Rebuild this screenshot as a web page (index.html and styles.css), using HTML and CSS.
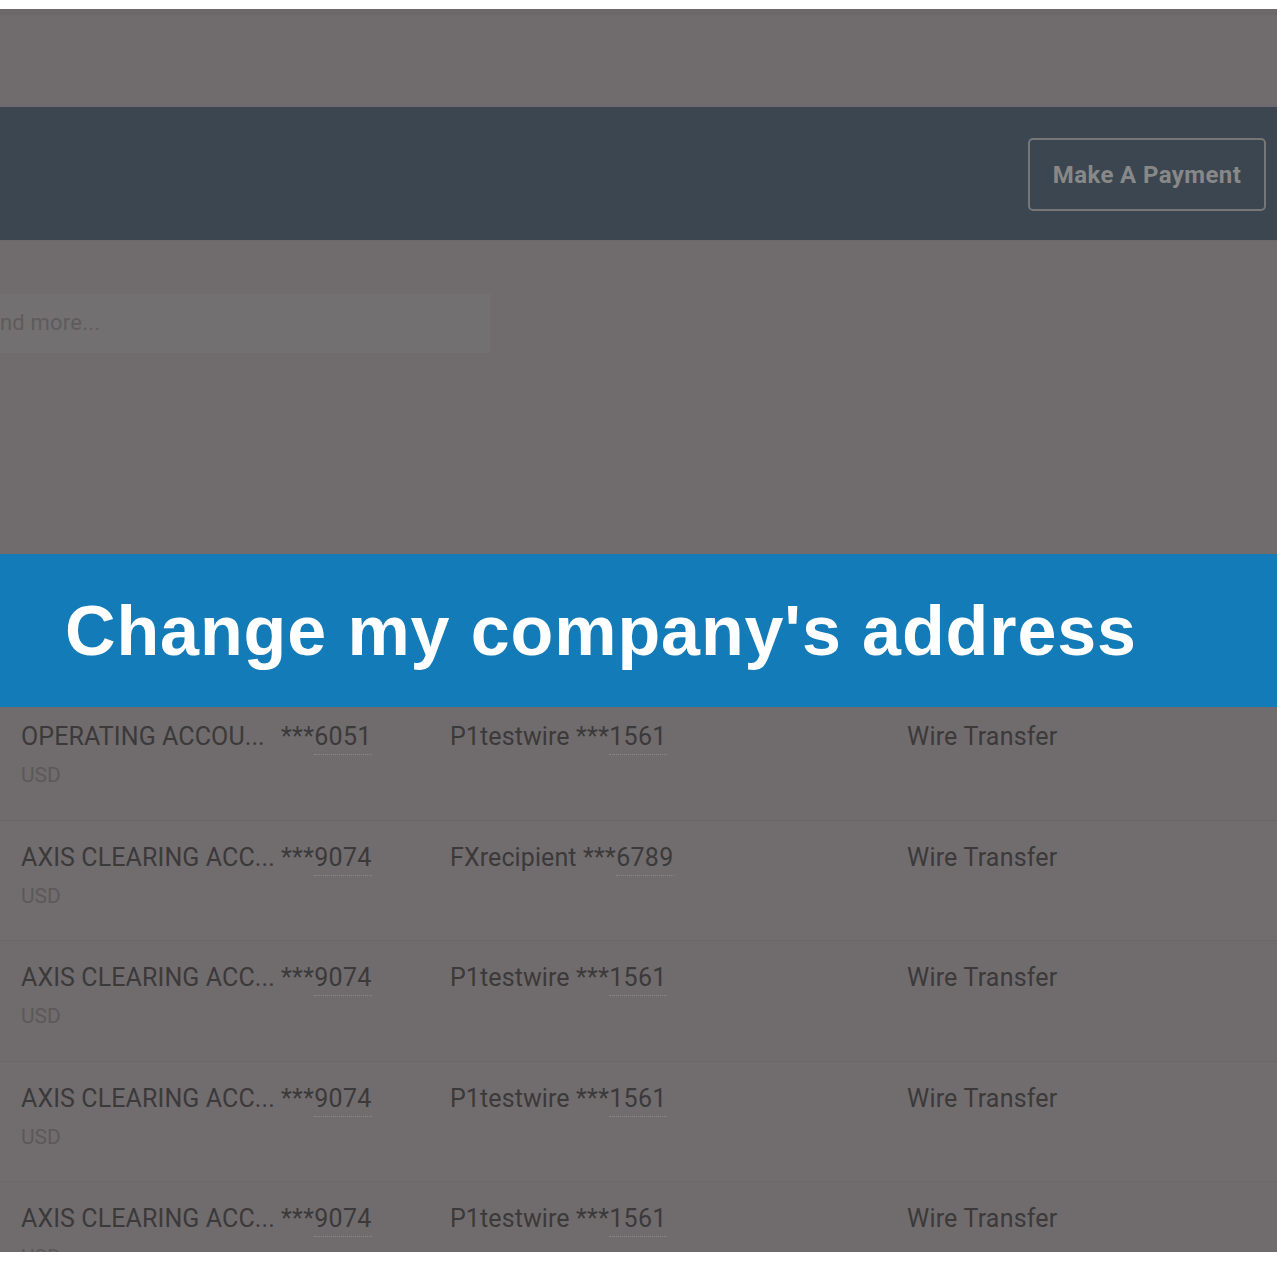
FILE: index.html
```html
<!DOCTYPE html>
<html lang="en">
<head>
    <meta charset="UTF-8">
    <meta name="viewport" content="width=device-width, initial-scale=1.0">
    <link rel="stylesheet" href="styles.css">
    <title>Payments</title>
</head>
<body>
    <div class="screen">
        <div class="topbar"></div>

        <div class="header">
            <button class="pay-button">Make A Payment</button>
        </div>

        <div class="toolbar">
            <div class="search">nd more...</div>
        </div>

        <div class="table">
            <div class="row">
                <div class="col-from">
                    <div class="line"><span class="name">OPERATING ACCOU...</span><span class="acct">***<u>6051</u></span></div>
                    <div class="currency">USD</div>
                </div>
                <div class="col-to">P1testwire <span class="acct">***<u>1561</u></span></div>
                <div class="col-type">Wire Transfer</div>
            </div>
            <div class="row">
                <div class="col-from">
                    <div class="line"><span class="name">AXIS CLEARING ACC...</span><span class="acct">***<u>9074</u></span></div>
                    <div class="currency">USD</div>
                </div>
                <div class="col-to">FXrecipient <span class="acct">***<u>6789</u></span></div>
                <div class="col-type">Wire Transfer</div>
            </div>
            <div class="row">
                <div class="col-from">
                    <div class="line"><span class="name">AXIS CLEARING ACC...</span><span class="acct">***<u>9074</u></span></div>
                    <div class="currency">USD</div>
                </div>
                <div class="col-to">P1testwire <span class="acct">***<u>1561</u></span></div>
                <div class="col-type">Wire Transfer</div>
            </div>
            <div class="row">
                <div class="col-from">
                    <div class="line"><span class="name">AXIS CLEARING ACC...</span><span class="acct">***<u>9074</u></span></div>
                    <div class="currency">USD</div>
                </div>
                <div class="col-to">P1testwire <span class="acct">***<u>1561</u></span></div>
                <div class="col-type">Wire Transfer</div>
            </div>
            <div class="row">
                <div class="col-from">
                    <div class="line"><span class="name">AXIS CLEARING ACC...</span><span class="acct">***<u>9074</u></span></div>
                    <div class="currency">USD</div>
                </div>
                <div class="col-to">P1testwire <span class="acct">***<u>1561</u></span></div>
                <div class="col-type">Wire Transfer</div>
            </div>
        </div>

        <div class="caption">
            <h1>Change my company's address</h1>
        </div>
    </div>
</body>
</html>
```

FILE: styles.css
```css
body {
    margin: 0;
    background-color: white;
    font-family: Roboto, "Liberation Sans", sans-serif;
}

.screen {
    position: relative;
    margin-top: 9px;
    height: 1243px;
    overflow: hidden;
    background-color: #706c6d;
}

.topbar {
    height: 98px;
    box-sizing: border-box;
    border-top: 6px solid #6c6869;
    border-bottom: 3px solid #6e6a70;
}

.header {
    height: 133px;
    background-color: #3b4650;
    display: flex;
    align-items: center;
    justify-content: flex-end;
    padding-right: 11px;
}

.pay-button {
    width: 238px;
    height: 73px;
    margin-top: 2px;
    background-color: transparent;
    border: 2px solid #767676;
    border-radius: 5px;
    color: #888888;
    font-family: Roboto, sans-serif;
    font-size: 24px;
    font-weight: bold;
    letter-spacing: 0.4px;
}

.toolbar {
    height: 460px;
    padding-top: 53px;
    box-sizing: border-box;
    border-top: 1px solid #6d696a;
}

.search {
    width: 490px;
    height: 59px;
    box-sizing: border-box;
    background-color: #737071;
    color: #5f5b5c;
    font-size: 22px;
    line-height: 57px;
    letter-spacing: 0.2px;
}

.row {
    height: 120.5px;
    box-sizing: border-box;
    display: flex;
    padding-top: 22px;
    border-bottom: 1px solid #6b6768;
    color: #3c393a;
    font-size: 25px;
    letter-spacing: 0.1px;
}

.row:nth-child(even) {
    background-color: #716d6e;
}

.col-from {
    width: 429px;
    padding-left: 21px;
}

.name {
    display: inline-block;
    width: 260px;
}

.acct {
    letter-spacing: 0.3px;
}

.acct u {
    text-decoration: none;
    border-bottom: 1px dotted #8c8889;
    padding-bottom: 3px;
}

.currency {
    margin-top: 12px;
    color: #5c5859;
    font-size: 21px;
    letter-spacing: 0;
}

.col-to {
    width: 457px;
}

.col-type {
    flex: 1;
    letter-spacing: 0.2px;
}

.caption {
    position: absolute;
    top: 545px;
    left: 0;
    right: 0;
    height: 153px;
    background-color: #137bb8;
    display: flex;
    align-items: center;
    padding-left: 65px;
}

.caption h1 {
    margin: 0;
    color: white;
    font-family: "Liberation Sans", Arial, sans-serif;
    font-size: 70px;
    font-weight: bold;
    letter-spacing: 0.9px;
}
```
